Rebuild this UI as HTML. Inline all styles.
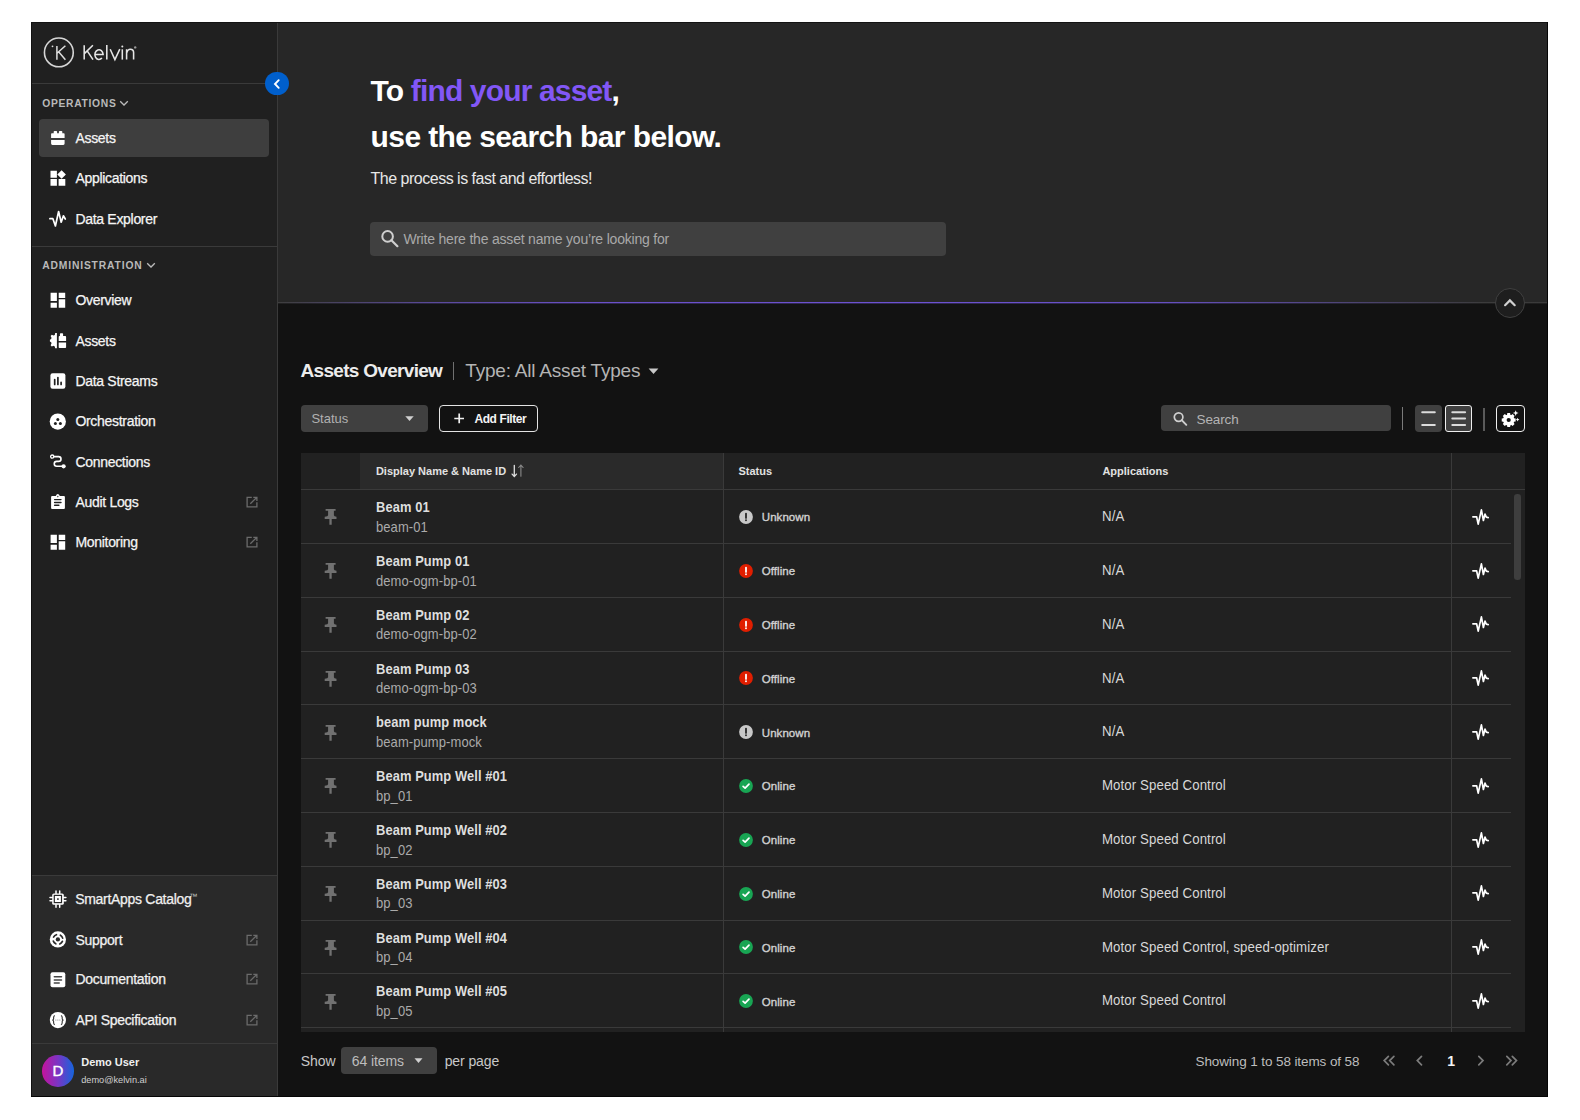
<!DOCTYPE html>
<html><head><meta charset="utf-8">
<style>
*{box-sizing:border-box;margin:0;padding:0}
html,body{width:1580px;height:1120px;background:#fff;overflow:hidden;font-family:"Liberation Sans",sans-serif}
.t{position:absolute;white-space:nowrap}
.b{position:absolute}
</style></head><body>

<div class="b" style="left:31px;top:22px;width:1517px;height:1075px;background:#121212;"></div>
<div class="b" style="left:31px;top:22px;width:246px;height:853px;background:#202020;"></div>
<div class="b" style="left:31px;top:876px;width:246px;height:221px;background:#292929;"></div>
<div class="b" style="left:277px;top:22px;width:1px;height:1075px;background:#3a3a3a;"></div>
<div class="b" style="left:31px;top:875px;width:246px;height:1px;background:#3a3a3a;"></div>
<div class="b" style="left:31px;top:83px;width:246px;height:1px;background:#3a3a3a;"></div>
<div class="b" style="left:31px;top:246px;width:246px;height:1px;background:#3a3a3a;"></div>
<div class="b" style="left:31px;top:1043px;width:246px;height:1px;background:#3a3a3a;"></div>
<svg class="b" style="left:31px;top:22px;" width="246" height="60" viewBox="31 22 246 60"><circle cx="58.85" cy="52.4" r="14.4" fill="none" stroke="#d6d6d6" stroke-width="1.6"/><path d="M56.9 45.9V59.7 M65.4 45.7L57.3 53 M58.6 51.8L65.4 59.7" fill="none" stroke="#dedede" stroke-width="1.5"/><circle cx="52.5" cy="46.3" r="0.9" fill="#dedede"/><g fill="none" stroke="#e6e6e6" stroke-width="1.55"><path d="M84.2 45.3V59.6 M92.9 45.3L84.6 53.4 M87.2 50.9L93 59.6"/><path d="M94.9 54.4H103.1 A4.1 4.9 0 1 0 101.9 58.1"/><path d="M106.8 45V59.6"/><path d="M110.2 49.2L114.9 59.6L119.8 49.2"/><path d="M122.3 49.3V59.6"/><path d="M126.6 59.6V49.3 M126.6 53.2Q127.6 49.2 130.3 49.2Q133.6 49.2 133.6 52.6V59.6"/></g><circle cx="122.3" cy="46.6" r="1" fill="#e6e6e6"/><circle cx="135.2" cy="47.4" r="1.2" fill="#999"/></svg>
<div class="t" style="left:42.20px;top:96.90px;font-size:10.3px;line-height:13px;font-weight:700;color:#b9b9b9;letter-spacing:0.7px;">OPERATIONS</div>
<svg class="b" style="left:119px;top:100px;" width="10" height="7" viewBox="0 0 10 7"><path d="M1.2 1.3L5 5L8.8 1.3" fill="none" stroke="#bbb" stroke-width="1.3"/></svg>
<div class="t" style="left:42.20px;top:259.01px;font-size:10.3px;line-height:13px;font-weight:700;color:#b9b9b9;letter-spacing:0.85px;">ADMINISTRATION</div>
<svg class="b" style="left:146px;top:262px;" width="10" height="7" viewBox="0 0 10 7"><path d="M1.2 1.3L5 5L8.8 1.3" fill="none" stroke="#bbb" stroke-width="1.3"/></svg>
<div class="b" style="left:39px;top:119px;width:230px;height:38px;background:#3e3e3e;border-radius:4px"></div>
<svg class="b" style="left:46px;top:126px;" width="24" height="24" viewBox="0 0 24 24"><path d="M5.1 12V8.1Q5.1 7.3 5.9 7.3H7.7V5.7Q7.7 4.9 8.5 4.9H10.3Q11.1 4.9 11.1 5.7V7.3H12.9V5.7Q12.9 4.9 13.7 4.9H15.5Q16.3 4.9 16.3 5.7V7.3H17.8Q18.6 7.3 18.6 8.1V12Z M5.1 13.9H18.6V17.6Q18.6 18.9 17.3 18.9H6.4Q5.1 18.9 5.1 17.6Z" fill="#fff"/></svg>
<div class="t" style="left:75.40px;top:129.10px;font-size:14px;line-height:18px;font-weight:400;color:#f5f5f5;letter-spacing:-0.3px;-webkit-text-stroke:0.25px #f5f5f5">Assets</div>
<svg class="b" style="left:46px;top:166px;" width="24" height="24" viewBox="0 0 24 24"><path d="M4.5 4.8H10.9V11.7H4.5Z M4.5 13.1H10.9V19.8H4.5Z M12.6 13.1H19.3V19.8H12.6Z M15.6 4.2L19.9 8.5L15.6 12.8L11.3 8.5Z" fill="#fff"/></svg>
<div class="t" style="left:75.40px;top:169.10px;font-size:14px;line-height:18px;font-weight:400;color:#f5f5f5;letter-spacing:-0.3px;-webkit-text-stroke:0.25px #f5f5f5">Applications</div>
<svg class="b" style="left:46px;top:207px;" width="24" height="24" viewBox="0 0 24 24"><path d="M3.9 11.7H6.9L9.4 19L12.6 4.5L15.2 15.2L17.4 8.8L19.3 12" fill="none" stroke="#fff" stroke-width="1.7" stroke-linejoin="round" stroke-linecap="round"/></svg>
<div class="t" style="left:75.40px;top:209.51px;font-size:14px;line-height:18px;font-weight:400;color:#f5f5f5;letter-spacing:-0.3px;-webkit-text-stroke:0.25px #f5f5f5">Data Explorer</div>
<svg class="b" style="left:46px;top:288px;" width="24" height="24" viewBox="0 0 24 24"><path d="M4.6 4.8H10.9V13.1H4.6Z M4.6 14.8H10.9V19.7H4.6Z M12.7 4.8H19.2V9.9H12.7Z M12.7 11.2H19.2V19.7H12.7Z" fill="#fff"/></svg>
<div class="t" style="left:75.40px;top:291.01px;font-size:14px;line-height:18px;font-weight:400;color:#f5f5f5;letter-spacing:-0.3px;-webkit-text-stroke:0.25px #f5f5f5">Overview</div>
<svg class="b" style="left:46px;top:329px;" width="24" height="24" viewBox="0 0 24 24"><path d="M10.9 4.1V19.3H9.2L8.8 17.4 7.5 16.8 5.8 17.6 4.6 16.2 5.5 14.6 5.2 13.2 3.9 12.5V10.8L5.2 10.1 5.5 8.7 4.6 7.1 5.8 5.7 7.5 6.5 8.8 5.9 9.2 4.1Z M12.7 7.9Q12.7 7.1 13.5 7.1H13.9V5Q13.9 4.2 14.7 4.2H16.3Q17.1 4.2 17.1 5V7.1H19.3Q20.1 7.1 20.1 7.9V11.9H12.7Z M12.7 13.4H20.1V18.3Q20.1 19.1 19.3 19.1H13.5Q12.7 19.1 12.7 18.3Z" fill="#fff"/></svg>
<div class="t" style="left:75.40px;top:331.60px;font-size:14px;line-height:18px;font-weight:400;color:#f5f5f5;letter-spacing:-0.3px;-webkit-text-stroke:0.25px #f5f5f5">Assets</div>
<svg class="b" style="left:46px;top:369px;" width="24" height="24" viewBox="0 0 24 24"><rect x="4.4" y="4.2" width="15" height="15.6" rx="2.2" fill="#fff"/><path d="M8.7 10.6V15.4 M11.9 8.5V15.4 M15.1 13.4V15.4" stroke="#202020" stroke-width="1.7" stroke-linecap="round"/></svg>
<div class="t" style="left:75.40px;top:371.60px;font-size:14px;line-height:18px;font-weight:400;color:#f5f5f5;letter-spacing:-0.3px;-webkit-text-stroke:0.25px #f5f5f5">Data Streams</div>
<svg class="b" style="left:46px;top:410px;" width="24" height="24" viewBox="0 0 24 24"><circle cx="11.8" cy="11.6" r="8.1" fill="#fff"/><circle cx="11.8" cy="9.4" r="1.5" fill="#202020"/><circle cx="9.4" cy="13.4" r="1.5" fill="#202020"/><circle cx="14.4" cy="13.4" r="1.5" fill="#202020"/></svg>
<div class="t" style="left:75.40px;top:412.20px;font-size:14px;line-height:18px;font-weight:400;color:#f5f5f5;letter-spacing:-0.3px;-webkit-text-stroke:0.25px #f5f5f5">Orchestration</div>
<svg class="b" style="left:46px;top:450px;" width="24" height="24" viewBox="0 0 24 24"><circle cx="6.2" cy="6.6" r="1.6" fill="none" stroke="#fff" stroke-width="1.3"/><path d="M7.9 6.6H12.6A2.4 2.4 0 0 1 12.6 11.4H10.7A2.45 2.45 0 0 0 10.7 16.3H16" fill="none" stroke="#fff" stroke-width="1.6"/><circle cx="17.6" cy="16.3" r="2.1" fill="#fff"/></svg>
<div class="t" style="left:75.40px;top:452.60px;font-size:14px;line-height:18px;font-weight:400;color:#f5f5f5;letter-spacing:-0.3px;-webkit-text-stroke:0.25px #f5f5f5">Connections</div>
<svg class="b" style="left:46px;top:490px;" width="24" height="24" viewBox="0 0 24 24"><path d="M6.1 6H9.8Q10.6 3.9 11.8 3.9Q13 3.9 13.8 6H17.9Q18.9 6 18.9 7V17.9Q18.9 18.9 17.9 18.9H6.1Q5.1 18.9 5.1 17.9V7Q5.1 6 6.1 6Z" fill="#fff"/><circle cx="11.8" cy="6.6" r="0.8" fill="#555"/><path d="M8.6 9.6H15 M8.6 12.5H15 M8.6 15.3H12.9" stroke="#202020" stroke-width="1.4" stroke-linecap="round"/></svg>
<div class="t" style="left:75.40px;top:493.01px;font-size:14px;line-height:18px;font-weight:400;color:#f5f5f5;letter-spacing:-0.3px;-webkit-text-stroke:0.25px #f5f5f5">Audit Logs</div>
<svg class="b" style="left:240px;top:490.0px;" width="24" height="24" viewBox="0 0 24 24"><path d="M11.8 7.3H7.1V16.9H16.9V12.2 M13.3 7.3H16.9V10.9 M16.5 7.7L10.3 13.8" fill="none" stroke="#6b6b6b" stroke-width="1.3"/></svg>
<svg class="b" style="left:46px;top:530px;" width="24" height="24" viewBox="0 0 24 24"><path d="M4.6 4.8H10.9V13.1H4.6Z M4.6 14.8H10.9V19.7H4.6Z M12.7 4.8H19.2V9.9H12.7Z M12.7 11.2H19.2V19.7H12.7Z" fill="#fff"/></svg>
<div class="t" style="left:75.40px;top:533.01px;font-size:14px;line-height:18px;font-weight:400;color:#f5f5f5;letter-spacing:-0.3px;-webkit-text-stroke:0.25px #f5f5f5">Monitoring</div>
<svg class="b" style="left:240px;top:530.0px;" width="24" height="24" viewBox="0 0 24 24"><path d="M11.8 7.3H7.1V16.9H16.9V12.2 M13.3 7.3H16.9V10.9 M16.5 7.7L10.3 13.8" fill="none" stroke="#6b6b6b" stroke-width="1.3"/></svg>
<svg class="b" style="left:46px;top:887px;" width="24" height="24" viewBox="0 0 24 24"><path d="M10 4.1V6.5 M13.7 4.1V6.5 M10 17.7V20.2 M13.7 17.7V20.2 M4 10.5H6.4 M4 13.7H6.4 M17.4 10.5H19.9 M17.4 13.7H19.9" stroke="#fff" stroke-width="1.5" stroke-linecap="round"/><rect x="6.2" y="6.4" width="11.6" height="11.4" rx="1.6" fill="#fff"/><rect x="8.3" y="8.4" width="7.2" height="7.2" fill="none" stroke="#292929" stroke-width="1.2"/><rect x="11" y="11.2" width="1.8" height="1.8" fill="#555"/></svg>
<div class="t" style="left:75.20px;top:889.70px;font-size:14px;line-height:18px;font-weight:400;color:#f0f0f0;letter-spacing:-0.3px;-webkit-text-stroke:0.25px #f0f0f0">SmartApps Catalog</div>
<div class="t" style="left:189.30px;top:891.51px;font-size:8px;line-height:10px;font-weight:400;color:#c4c4c4;letter-spacing:0px;">™</div>
<svg class="b" style="left:46px;top:927px;" width="24" height="24" viewBox="0 0 24 24"><circle cx="11.9" cy="12.4" r="8.1" fill="#fff"/><circle cx="11.9" cy="12.4" r="2.15" fill="#292929"/><circle cx="11.9" cy="12.4" r="4.9" fill="none" stroke="#292929" stroke-width="1.7" stroke-dasharray="3.6 4.1" stroke-dashoffset="5.7" stroke-linecap="round"/></svg>
<div class="t" style="left:75.40px;top:930.70px;font-size:14px;line-height:18px;font-weight:400;color:#f0f0f0;letter-spacing:-0.3px;-webkit-text-stroke:0.25px #f5f5f5">Support</div>
<svg class="b" style="left:240px;top:927.7px;" width="24" height="24" viewBox="0 0 24 24"><path d="M11.8 7.3H7.1V16.9H16.9V12.2 M13.3 7.3H16.9V10.9 M16.5 7.7L10.3 13.8" fill="none" stroke="#6b6b6b" stroke-width="1.3"/></svg>
<svg class="b" style="left:46px;top:968px;" width="24" height="24" viewBox="0 0 24 24"><rect x="4.5" y="4.3" width="14.8" height="15" rx="2" fill="#fff"/><path d="M8.3 8.7H15.5 M8.3 11.9H15.5 M8.3 15H13.2" stroke="#444" stroke-width="1.5" stroke-linecap="round"/></svg>
<div class="t" style="left:75.40px;top:970.10px;font-size:14px;line-height:18px;font-weight:400;color:#f0f0f0;letter-spacing:-0.3px;-webkit-text-stroke:0.25px #f5f5f5">Documentation</div>
<svg class="b" style="left:240px;top:967.1px;" width="24" height="24" viewBox="0 0 24 24"><path d="M11.8 7.3H7.1V16.9H16.9V12.2 M13.3 7.3H16.9V10.9 M16.5 7.7L10.3 13.8" fill="none" stroke="#6b6b6b" stroke-width="1.3"/></svg>
<svg class="b" style="left:46px;top:1008px;" width="24" height="24" viewBox="0 0 24 24"><circle cx="11.9" cy="12.1" r="8.1" fill="#fff"/><path d="M8.8 7.4Q7.6 8 7.6 9.5V10.8Q7.6 11.9 6.4 12.1Q7.6 12.3 7.6 13.4V14.7Q7.6 16.2 8.8 16.8 M15 7.4Q16.2 8 16.2 9.5V10.8Q16.2 11.9 17.4 12.1Q16.2 12.3 16.2 13.4V14.7Q16.2 16.2 15 16.8" fill="none" stroke="#3a3a3a" stroke-width="1.15"/><circle cx="9.9" cy="12.1" r="0.5" fill="#666"/><circle cx="11.9" cy="12.1" r="0.5" fill="#666"/><circle cx="13.9" cy="12.1" r="0.5" fill="#666"/></svg>
<div class="t" style="left:75.40px;top:1011.10px;font-size:14px;line-height:18px;font-weight:400;color:#f0f0f0;letter-spacing:-0.3px;-webkit-text-stroke:0.25px #f5f5f5">API Specification</div>
<svg class="b" style="left:240px;top:1008.0999999999999px;" width="24" height="24" viewBox="0 0 24 24"><path d="M11.8 7.3H7.1V16.9H16.9V12.2 M13.3 7.3H16.9V10.9 M16.5 7.7L10.3 13.8" fill="none" stroke="#6b6b6b" stroke-width="1.3"/></svg>
<div class="b" style="left:42px;top:1055.3px;width:31.7px;height:31.7px;border-radius:50%;background:linear-gradient(90deg,#c4139c 0%,#7a35c4 50%,#1565dc 100%)"></div>
<div class="t" style="left:52.60px;top:1060.91px;font-size:15px;line-height:20px;font-weight:400;color:#fff;letter-spacing:0px;-webkit-text-stroke:0.4px #fff">D</div>
<div class="t" style="left:81.20px;top:1055.41px;font-size:11px;line-height:14px;font-weight:700;color:#f0f0f0;letter-spacing:0px;">Demo User</div>
<div class="t" style="left:81.20px;top:1074.01px;font-size:9.2px;line-height:12px;font-weight:400;color:#d0d0d0;letter-spacing:0px;">demo@kelvin.ai</div>
<div class="b" style="left:278px;top:22px;width:1270px;height:280px;background:#272727;"></div>
<div class="b" style="left:278px;top:302px;width:1270px;height:1px;background:linear-gradient(90deg,#3e3e3e 0%,#5a4a9a 12%,#6a50c8 25%,#6c52d2 50%,#6650c0 70%,#4c4470 85%,#3c3c3c 95%,#3a3a3a 100%)"></div>
<div class="b" style="left:278px;top:303px;width:1270px;height:1px;opacity:0.35;background:linear-gradient(90deg,#3e3e3e 0%,#5a4a9a 12%,#6a50c8 25%,#6c52d2 50%,#6650c0 70%,#4c4470 85%,#3c3c3c 95%,#3a3a3a 100%)"></div>
<div class="t" style="left:370.60px;top:70.90px;font-size:30px;line-height:39px;font-weight:700;color:#ffffff;letter-spacing:-0.85px;">To <span style="color:#8257f6">find your asset</span>,</div>
<div class="t" style="left:370.60px;top:117.01px;font-size:30px;line-height:39px;font-weight:700;color:#ffffff;letter-spacing:-0.6px;">use the search bar below.</div>
<div class="t" style="left:370.60px;top:168.30px;font-size:16px;line-height:21px;font-weight:400;color:#e8e8e8;letter-spacing:-0.5px;">The process is fast and effortless!</div>
<div class="b" style="left:370px;top:222px;width:576px;height:34px;background:#404040;border-radius:4px"></div>
<svg class="b" style="left:376px;top:225px;" width="26" height="26" viewBox="0 0 26 26"><circle cx="11.6" cy="11.4" r="5.3" fill="none" stroke="#cfcfcf" stroke-width="2"/><path d="M15.4 15.2L21.4 21.2" stroke="#cfcfcf" stroke-width="2.2" stroke-linecap="round"/></svg>
<div class="t" style="left:403.40px;top:230.20px;font-size:14px;line-height:18px;font-weight:400;color:#a9a9a9;letter-spacing:-0.2px;">Write here the asset name you’re looking for</div>
<div class="b" style="left:1495px;top:287.5px;width:30px;height:30px;border-radius:50%;background:#1e1e1e;border:1px solid #404040"></div>
<svg class="b" style="left:1495px;top:287.5px;" width="30" height="30" viewBox="0 0 30 30"><path d="M10.1 17.2L14.9 12.4L19.7 17.2" fill="none" stroke="#d0d0d0" stroke-width="2.2" stroke-linecap="round"/></svg>
<div class="b" style="left:264.9px;top:71.6px;width:23.8px;height:23.8px;border-radius:50%;background:#005fcc"></div>
<svg class="b" style="left:264.9px;top:71.6px;" width="24" height="24" viewBox="0 0 24 24"><path d="M13.7 8.2L10 12L13.7 15.8" fill="none" stroke="#fff" stroke-width="1.9" stroke-linecap="round"/></svg>
<div class="t" style="left:300.60px;top:358.11px;font-size:19px;line-height:25px;font-weight:700;color:#ececec;letter-spacing:-0.7px;">Assets Overview</div>
<div class="b" style="left:452.5px;top:361.7px;width:1.1999999999999886px;height:18.80000000000001px;background:#707070;"></div>
<div class="t" style="left:465.30px;top:358.01px;font-size:19px;line-height:25px;font-weight:400;color:#b4b4b4;letter-spacing:-0.2px;">Type: All Asset Types</div>
<svg class="b" style="left:648px;top:368px;" width="11" height="7" viewBox="0 0 11 7"><path d="M0.6 0.6H10.4L5.5 6Z" fill="#c8c8c8"/></svg>
<div class="b" style="left:300.8px;top:405.1px;width:126.89999999999998px;height:26.599999999999966px;background:#404040;border-radius:4px"></div>
<div class="t" style="left:311.40px;top:410.31px;font-size:13px;line-height:17px;font-weight:400;color:#b0b0b0;letter-spacing:0px;">Status</div>
<svg class="b" style="left:405px;top:416px;" width="9" height="6" viewBox="0 0 9 6"><path d="M0.3 0.3H8.7L4.5 5Z" fill="#d0d0d0"/></svg>
<div class="b" style="left:439.1px;top:405.1px;width:99.1px;height:26.6px;border:1.5px solid #e4e4e4;border-radius:4px"></div>
<svg class="b" style="left:453px;top:412px;" width="12" height="12" viewBox="0 0 12 12"><path d="M6.2 1.6V11.3 M1.3 6.5H11" stroke="#f0f0f0" stroke-width="1.7"/></svg>
<div class="t" style="left:474.40px;top:410.81px;font-size:12px;line-height:16px;font-weight:700;color:#f4f4f4;letter-spacing:-0.4px;">Add Filter</div>
<div class="b" style="left:1160.8px;top:404.8px;width:230.20000000000005px;height:26.69999999999999px;background:#404040;border-radius:4px"></div>
<svg class="b" style="left:1170px;top:408px;" width="20" height="20" viewBox="0 0 20 20"><circle cx="8.6" cy="9.1" r="4.3" fill="none" stroke="#cfcfcf" stroke-width="1.7"/><path d="M11.7 12.2L16.3 16.8" stroke="#cfcfcf" stroke-width="1.9" stroke-linecap="round"/></svg>
<div class="t" style="left:1196.50px;top:410.51px;font-size:13.5px;line-height:18px;font-weight:400;color:#b4b4b4;letter-spacing:-0.1px;">Search</div>
<div class="b" style="left:1402px;top:406.6px;width:1.2000000000000455px;height:23.19999999999999px;background:#7a7a7a;"></div>
<div class="b" style="left:1414.5px;top:404.8px;width:27.0px;height:27.099999999999966px;background:#404040;border-radius:4px"></div>
<svg class="b" style="left:1414.5px;top:404.8px;" width="27" height="27.1" viewBox="1414.5 404.8 27 27.1"><path d="M1421.7 412H1434.3 M1421.7 424.8H1434.3" stroke="#dcdcdc" stroke-width="2" stroke-linecap="round"/></svg>
<div class="b" style="left:1445.1px;top:404.8px;width:27.1px;height:27.1px;border:1.5px solid #eeeeee;border-radius:3px;background:#404040"></div>
<svg class="b" style="left:1445.1px;top:404.8px;" width="27.1" height="27.1" viewBox="1445.1 404.8 27.1 27.1"><path d="M1452.4 412H1465.2 M1452.4 418.4H1465.2 M1452.4 424.8H1465.2" stroke="#dcdcdc" stroke-width="2" stroke-linecap="round"/></svg>
<div class="b" style="left:1483.4px;top:407.8px;width:1.599999999999909px;height:22.899999999999977px;background:#5a5a5a;"></div>
<div class="b" style="left:1496.4px;top:405px;width:28.4px;height:26.6px;border:1.5px solid #eeeeee;border-radius:4px"></div>
<svg class="b" style="left:1490px;top:398px;" width="40" height="40" viewBox="1490 398 40 40"><g transform="translate(1508.7 420)"><path d="M5.03 -1.67 L6.96 -1.41 L6.96 1.41 L5.03 1.67 L4.74 2.38 L5.92 3.92 L3.92 5.92 L2.38 4.74 L1.67 5.03 L1.41 6.96 L-1.41 6.96 L-1.67 5.03 L-2.38 4.74 L-3.92 5.92 L-5.92 3.92 L-4.74 2.38 L-5.03 1.67 L-6.96 1.41 L-6.96 -1.41 L-5.03 -1.67 L-4.74 -2.38 L-5.92 -3.92 L-3.92 -5.92 L-2.38 -4.74 L-1.67 -5.03 L-1.41 -6.96 L1.41 -6.96 L1.67 -5.03 L2.38 -4.74 L3.92 -5.92 L5.92 -3.92 L4.74 -2.38Z" fill="#fff"/><circle r="5.6" fill="#fff"/><circle r="2.1" fill="#121212"/></g><path d="M1515.7 410.2L1516.5 412.3 1518.6 413 1516.5 413.8 1515.7 415.9 1514.9 413.8 1512.8 413 1514.9 412.3Z M1517.6 417.8L1518.2 419 1519.4 419.6 1518.2 420.2 1517.6 421.4 1517 420.2 1515.8 419.6 1517 419Z" fill="#fff"/></svg>
<div class="b" style="left:301px;top:453px;width:1224px;height:578.5999999999999px;background:#212121;"></div>
<div class="b" style="left:360px;top:453px;width:362.75px;height:36.25px;background:#2a2a2a;"></div>
<div class="t" style="left:375.90px;top:464.00px;font-size:11px;line-height:14px;font-weight:700;color:#e2e2e2;letter-spacing:0px;">Display Name &amp; Name ID</div>
<svg class="b" style="left:510px;top:462px;" width="16" height="17" viewBox="0 0 16 17"><path d="M4.3 3.3V14.3 M2.1 12.1L4.3 14.5 6.5 12.1" fill="none" stroke="#dedede" stroke-width="1.3" stroke-linecap="round"/><path d="M10.9 14.3V3.3 M8.7 5.5L10.9 3.1 13.1 5.5" fill="none" stroke="#8a8a8a" stroke-width="1.1" stroke-linecap="round"/></svg>
<div class="t" style="left:738.40px;top:464.00px;font-size:11px;line-height:14px;font-weight:700;color:#e2e2e2;letter-spacing:0px;">Status</div>
<div class="t" style="left:1102.40px;top:464.00px;font-size:11px;line-height:14px;font-weight:700;color:#e2e2e2;letter-spacing:0px;">Applications</div>
<div class="b" style="left:301px;top:489px;width:1224px;height:1px;background:#3a3a3a;"></div>
<div class="b" style="left:722.5px;top:453px;width:1.0px;height:578.5999999999999px;background:#3a3a3a;"></div>
<div class="b" style="left:1451.2px;top:453px;width:1.0px;height:578.5999999999999px;background:#3a3a3a;"></div>
<div class="t" style="left:375.60px;top:498.15px;font-size:14.4px;line-height:19px;font-weight:700;color:#dedede;letter-spacing:0.1px;transform:scaleX(0.896);transform-origin:0 0;">Beam 01</div>
<div class="t" style="left:375.80px;top:517.76px;font-size:14.4px;line-height:19px;font-weight:400;color:#ababab;letter-spacing:0.1px;transform:scaleX(0.902);transform-origin:0 0;">beam-01</div>
<svg class="b" style="left:320px;top:505.35px;" width="22" height="24" viewBox="0 0 22 24"><path d="M5.6 4.1H15.6V5.8H13.9V10.2Q13.9 11.3 16.5 11.8V13.9H11.7V19.7H9.4V13.9H4.7V11.8Q8.1 11.3 8.1 10.2V5.8H5.6Z" fill="#717171"/></svg>
<svg class="b" style="left:739.1px;top:510.05px;" width="14" height="14" viewBox="0 0 14 14"><circle cx="7" cy="7" r="6.9" fill="#c8c8c8"/><path d="M7 3.6V7.9" stroke="#252525" stroke-width="1.8" stroke-linecap="round"/><circle cx="7" cy="10.2" r="0.95" fill="#252525"/></svg>
<div class="t" style="left:761.80px;top:510.46px;font-size:11.5px;line-height:15px;font-weight:400;color:#d2d2d2;letter-spacing:0.05px;-webkit-text-stroke:0.35px #d2d2d2">Unknown</div>
<div class="t" style="left:1102.40px;top:507.25px;font-size:14.6px;line-height:19px;font-weight:400;color:#d8d8d8;letter-spacing:0.1px;transform:scaleX(0.907);transform-origin:0 0;">N/A</div>
<svg class="b" style="left:1472.2px;top:508.75px;" width="17.5" height="17" viewBox="0 0 17.5 17"><path d="M0.9 7.8H4.6L6.2 15.1L9.4 0.9L11.4 11.5L13 5.1L14.3 8.2L16.2 8.6" fill="none" stroke="#fff" stroke-width="1.7" stroke-linejoin="round" stroke-linecap="round"/></svg>
<div class="b" style="left:301px;top:543px;width:1209.7px;height:1px;background:#3a3a3a;"></div>
<div class="t" style="left:375.60px;top:551.95px;font-size:14.4px;line-height:19px;font-weight:700;color:#dedede;letter-spacing:0.1px;transform:scaleX(0.896);transform-origin:0 0;">Beam Pump 01</div>
<div class="t" style="left:375.80px;top:571.56px;font-size:14.4px;line-height:19px;font-weight:400;color:#ababab;letter-spacing:0.1px;transform:scaleX(0.902);transform-origin:0 0;">demo-ogm-bp-01</div>
<svg class="b" style="left:320px;top:559.15px;" width="22" height="24" viewBox="0 0 22 24"><path d="M5.6 4.1H15.6V5.8H13.9V10.2Q13.9 11.3 16.5 11.8V13.9H11.7V19.7H9.4V13.9H4.7V11.8Q8.1 11.3 8.1 10.2V5.8H5.6Z" fill="#717171"/></svg>
<svg class="b" style="left:739.1px;top:563.8499999999999px;" width="14" height="14" viewBox="0 0 14 14"><circle cx="7" cy="7" r="6.9" fill="#e01e00"/><path d="M7 3.6V7.9" stroke="#fff" stroke-width="1.8" stroke-linecap="round"/><circle cx="7" cy="10.2" r="0.95" fill="#fff"/></svg>
<div class="t" style="left:761.80px;top:564.26px;font-size:11.5px;line-height:15px;font-weight:400;color:#d2d2d2;letter-spacing:0.05px;-webkit-text-stroke:0.35px #d2d2d2">Offline</div>
<div class="t" style="left:1102.40px;top:561.05px;font-size:14.6px;line-height:19px;font-weight:400;color:#d8d8d8;letter-spacing:0.1px;transform:scaleX(0.907);transform-origin:0 0;">N/A</div>
<svg class="b" style="left:1472.2px;top:562.55px;" width="17.5" height="17" viewBox="0 0 17.5 17"><path d="M0.9 7.8H4.6L6.2 15.1L9.4 0.9L11.4 11.5L13 5.1L14.3 8.2L16.2 8.6" fill="none" stroke="#fff" stroke-width="1.7" stroke-linejoin="round" stroke-linecap="round"/></svg>
<div class="b" style="left:301px;top:597px;width:1209.7px;height:1px;background:#3a3a3a;"></div>
<div class="t" style="left:375.60px;top:605.76px;font-size:14.4px;line-height:19px;font-weight:700;color:#dedede;letter-spacing:0.1px;transform:scaleX(0.896);transform-origin:0 0;">Beam Pump 02</div>
<div class="t" style="left:375.80px;top:625.35px;font-size:14.4px;line-height:19px;font-weight:400;color:#ababab;letter-spacing:0.1px;transform:scaleX(0.902);transform-origin:0 0;">demo-ogm-bp-02</div>
<svg class="b" style="left:320px;top:612.95px;" width="22" height="24" viewBox="0 0 22 24"><path d="M5.6 4.1H15.6V5.8H13.9V10.2Q13.9 11.3 16.5 11.8V13.9H11.7V19.7H9.4V13.9H4.7V11.8Q8.1 11.3 8.1 10.2V5.8H5.6Z" fill="#717171"/></svg>
<svg class="b" style="left:739.1px;top:617.65px;" width="14" height="14" viewBox="0 0 14 14"><circle cx="7" cy="7" r="6.9" fill="#e01e00"/><path d="M7 3.6V7.9" stroke="#fff" stroke-width="1.8" stroke-linecap="round"/><circle cx="7" cy="10.2" r="0.95" fill="#fff"/></svg>
<div class="t" style="left:761.80px;top:618.07px;font-size:11.5px;line-height:15px;font-weight:400;color:#d2d2d2;letter-spacing:0.05px;-webkit-text-stroke:0.35px #d2d2d2">Offline</div>
<div class="t" style="left:1102.40px;top:614.86px;font-size:14.6px;line-height:19px;font-weight:400;color:#d8d8d8;letter-spacing:0.1px;transform:scaleX(0.907);transform-origin:0 0;">N/A</div>
<svg class="b" style="left:1472.2px;top:616.35px;" width="17.5" height="17" viewBox="0 0 17.5 17"><path d="M0.9 7.8H4.6L6.2 15.1L9.4 0.9L11.4 11.5L13 5.1L14.3 8.2L16.2 8.6" fill="none" stroke="#fff" stroke-width="1.7" stroke-linejoin="round" stroke-linecap="round"/></svg>
<div class="b" style="left:301px;top:651px;width:1209.7px;height:1px;background:#3a3a3a;"></div>
<div class="t" style="left:375.60px;top:659.56px;font-size:14.4px;line-height:19px;font-weight:700;color:#dedede;letter-spacing:0.1px;transform:scaleX(0.896);transform-origin:0 0;">Beam Pump 03</div>
<div class="t" style="left:375.80px;top:679.15px;font-size:14.4px;line-height:19px;font-weight:400;color:#ababab;letter-spacing:0.1px;transform:scaleX(0.902);transform-origin:0 0;">demo-ogm-bp-03</div>
<svg class="b" style="left:320px;top:666.75px;" width="22" height="24" viewBox="0 0 22 24"><path d="M5.6 4.1H15.6V5.8H13.9V10.2Q13.9 11.3 16.5 11.8V13.9H11.7V19.7H9.4V13.9H4.7V11.8Q8.1 11.3 8.1 10.2V5.8H5.6Z" fill="#717171"/></svg>
<svg class="b" style="left:739.1px;top:671.4499999999999px;" width="14" height="14" viewBox="0 0 14 14"><circle cx="7" cy="7" r="6.9" fill="#e01e00"/><path d="M7 3.6V7.9" stroke="#fff" stroke-width="1.8" stroke-linecap="round"/><circle cx="7" cy="10.2" r="0.95" fill="#fff"/></svg>
<div class="t" style="left:761.80px;top:671.85px;font-size:11.5px;line-height:15px;font-weight:400;color:#d2d2d2;letter-spacing:0.05px;-webkit-text-stroke:0.35px #d2d2d2">Offline</div>
<div class="t" style="left:1102.40px;top:668.66px;font-size:14.6px;line-height:19px;font-weight:400;color:#d8d8d8;letter-spacing:0.1px;transform:scaleX(0.907);transform-origin:0 0;">N/A</div>
<svg class="b" style="left:1472.2px;top:670.15px;" width="17.5" height="17" viewBox="0 0 17.5 17"><path d="M0.9 7.8H4.6L6.2 15.1L9.4 0.9L11.4 11.5L13 5.1L14.3 8.2L16.2 8.6" fill="none" stroke="#fff" stroke-width="1.7" stroke-linejoin="round" stroke-linecap="round"/></svg>
<div class="b" style="left:301px;top:704px;width:1209.7px;height:1px;background:#3a3a3a;"></div>
<div class="t" style="left:375.60px;top:713.35px;font-size:14.4px;line-height:19px;font-weight:700;color:#dedede;letter-spacing:0.1px;transform:scaleX(0.896);transform-origin:0 0;">beam pump mock</div>
<div class="t" style="left:375.80px;top:732.95px;font-size:14.4px;line-height:19px;font-weight:400;color:#ababab;letter-spacing:0.1px;transform:scaleX(0.902);transform-origin:0 0;">beam-pump-mock</div>
<svg class="b" style="left:320px;top:720.5500000000001px;" width="22" height="24" viewBox="0 0 22 24"><path d="M5.6 4.1H15.6V5.8H13.9V10.2Q13.9 11.3 16.5 11.8V13.9H11.7V19.7H9.4V13.9H4.7V11.8Q8.1 11.3 8.1 10.2V5.8H5.6Z" fill="#717171"/></svg>
<svg class="b" style="left:739.1px;top:725.25px;" width="14" height="14" viewBox="0 0 14 14"><circle cx="7" cy="7" r="6.9" fill="#c8c8c8"/><path d="M7 3.6V7.9" stroke="#252525" stroke-width="1.8" stroke-linecap="round"/><circle cx="7" cy="10.2" r="0.95" fill="#252525"/></svg>
<div class="t" style="left:761.80px;top:725.66px;font-size:11.5px;line-height:15px;font-weight:400;color:#d2d2d2;letter-spacing:0.05px;-webkit-text-stroke:0.35px #d2d2d2">Unknown</div>
<div class="t" style="left:1102.40px;top:722.46px;font-size:14.6px;line-height:19px;font-weight:400;color:#d8d8d8;letter-spacing:0.1px;transform:scaleX(0.907);transform-origin:0 0;">N/A</div>
<svg class="b" style="left:1472.2px;top:723.95px;" width="17.5" height="17" viewBox="0 0 17.5 17"><path d="M0.9 7.8H4.6L6.2 15.1L9.4 0.9L11.4 11.5L13 5.1L14.3 8.2L16.2 8.6" fill="none" stroke="#fff" stroke-width="1.7" stroke-linejoin="round" stroke-linecap="round"/></svg>
<div class="b" style="left:301px;top:758px;width:1209.7px;height:1px;background:#3a3a3a;"></div>
<div class="t" style="left:375.60px;top:767.15px;font-size:14.4px;line-height:19px;font-weight:700;color:#dedede;letter-spacing:0.1px;transform:scaleX(0.896);transform-origin:0 0;">Beam Pump Well #01</div>
<div class="t" style="left:375.80px;top:786.76px;font-size:14.4px;line-height:19px;font-weight:400;color:#ababab;letter-spacing:0.1px;transform:scaleX(0.902);transform-origin:0 0;">bp_01</div>
<svg class="b" style="left:320px;top:774.35px;" width="22" height="24" viewBox="0 0 22 24"><path d="M5.6 4.1H15.6V5.8H13.9V10.2Q13.9 11.3 16.5 11.8V13.9H11.7V19.7H9.4V13.9H4.7V11.8Q8.1 11.3 8.1 10.2V5.8H5.6Z" fill="#717171"/></svg>
<svg class="b" style="left:739.1px;top:779.05px;" width="14" height="14" viewBox="0 0 14 14"><circle cx="7" cy="7" r="6.9" fill="#18a553"/><path d="M4.1 7.3L6.1 9.2L10 5.2" fill="none" stroke="#fff" stroke-width="1.7" stroke-linecap="round" stroke-linejoin="round"/></svg>
<div class="t" style="left:761.80px;top:779.46px;font-size:11.5px;line-height:15px;font-weight:400;color:#d2d2d2;letter-spacing:0.05px;-webkit-text-stroke:0.35px #d2d2d2">Online</div>
<div class="t" style="left:1102.40px;top:776.25px;font-size:14.6px;line-height:19px;font-weight:400;color:#d8d8d8;letter-spacing:0.1px;transform:scaleX(0.907);transform-origin:0 0;">Motor Speed Control</div>
<svg class="b" style="left:1472.2px;top:777.75px;" width="17.5" height="17" viewBox="0 0 17.5 17"><path d="M0.9 7.8H4.6L6.2 15.1L9.4 0.9L11.4 11.5L13 5.1L14.3 8.2L16.2 8.6" fill="none" stroke="#fff" stroke-width="1.7" stroke-linejoin="round" stroke-linecap="round"/></svg>
<div class="b" style="left:301px;top:812px;width:1209.7px;height:1px;background:#3a3a3a;"></div>
<div class="t" style="left:375.60px;top:820.95px;font-size:14.4px;line-height:19px;font-weight:700;color:#dedede;letter-spacing:0.1px;transform:scaleX(0.896);transform-origin:0 0;">Beam Pump Well #02</div>
<div class="t" style="left:375.80px;top:840.56px;font-size:14.4px;line-height:19px;font-weight:400;color:#ababab;letter-spacing:0.1px;transform:scaleX(0.902);transform-origin:0 0;">bp_02</div>
<svg class="b" style="left:320px;top:828.15px;" width="22" height="24" viewBox="0 0 22 24"><path d="M5.6 4.1H15.6V5.8H13.9V10.2Q13.9 11.3 16.5 11.8V13.9H11.7V19.7H9.4V13.9H4.7V11.8Q8.1 11.3 8.1 10.2V5.8H5.6Z" fill="#717171"/></svg>
<svg class="b" style="left:739.1px;top:832.8499999999999px;" width="14" height="14" viewBox="0 0 14 14"><circle cx="7" cy="7" r="6.9" fill="#18a553"/><path d="M4.1 7.3L6.1 9.2L10 5.2" fill="none" stroke="#fff" stroke-width="1.7" stroke-linecap="round" stroke-linejoin="round"/></svg>
<div class="t" style="left:761.80px;top:833.26px;font-size:11.5px;line-height:15px;font-weight:400;color:#d2d2d2;letter-spacing:0.05px;-webkit-text-stroke:0.35px #d2d2d2">Online</div>
<div class="t" style="left:1102.40px;top:830.05px;font-size:14.6px;line-height:19px;font-weight:400;color:#d8d8d8;letter-spacing:0.1px;transform:scaleX(0.907);transform-origin:0 0;">Motor Speed Control</div>
<svg class="b" style="left:1472.2px;top:831.55px;" width="17.5" height="17" viewBox="0 0 17.5 17"><path d="M0.9 7.8H4.6L6.2 15.1L9.4 0.9L11.4 11.5L13 5.1L14.3 8.2L16.2 8.6" fill="none" stroke="#fff" stroke-width="1.7" stroke-linejoin="round" stroke-linecap="round"/></svg>
<div class="b" style="left:301px;top:866px;width:1209.7px;height:1px;background:#3a3a3a;"></div>
<div class="t" style="left:375.60px;top:874.76px;font-size:14.4px;line-height:19px;font-weight:700;color:#dedede;letter-spacing:0.1px;transform:scaleX(0.896);transform-origin:0 0;">Beam Pump Well #03</div>
<div class="t" style="left:375.80px;top:894.35px;font-size:14.4px;line-height:19px;font-weight:400;color:#ababab;letter-spacing:0.1px;transform:scaleX(0.902);transform-origin:0 0;">bp_03</div>
<svg class="b" style="left:320px;top:881.9499999999999px;" width="22" height="24" viewBox="0 0 22 24"><path d="M5.6 4.1H15.6V5.8H13.9V10.2Q13.9 11.3 16.5 11.8V13.9H11.7V19.7H9.4V13.9H4.7V11.8Q8.1 11.3 8.1 10.2V5.8H5.6Z" fill="#717171"/></svg>
<svg class="b" style="left:739.1px;top:886.6499999999999px;" width="14" height="14" viewBox="0 0 14 14"><circle cx="7" cy="7" r="6.9" fill="#18a553"/><path d="M4.1 7.3L6.1 9.2L10 5.2" fill="none" stroke="#fff" stroke-width="1.7" stroke-linecap="round" stroke-linejoin="round"/></svg>
<div class="t" style="left:761.80px;top:887.07px;font-size:11.5px;line-height:15px;font-weight:400;color:#d2d2d2;letter-spacing:0.05px;-webkit-text-stroke:0.35px #d2d2d2">Online</div>
<div class="t" style="left:1102.40px;top:883.86px;font-size:14.6px;line-height:19px;font-weight:400;color:#d8d8d8;letter-spacing:0.1px;transform:scaleX(0.907);transform-origin:0 0;">Motor Speed Control</div>
<svg class="b" style="left:1472.2px;top:885.3499999999999px;" width="17.5" height="17" viewBox="0 0 17.5 17"><path d="M0.9 7.8H4.6L6.2 15.1L9.4 0.9L11.4 11.5L13 5.1L14.3 8.2L16.2 8.6" fill="none" stroke="#fff" stroke-width="1.7" stroke-linejoin="round" stroke-linecap="round"/></svg>
<div class="b" style="left:301px;top:920px;width:1209.7px;height:1px;background:#3a3a3a;"></div>
<div class="t" style="left:375.60px;top:928.56px;font-size:14.4px;line-height:19px;font-weight:700;color:#dedede;letter-spacing:0.1px;transform:scaleX(0.896);transform-origin:0 0;">Beam Pump Well #04</div>
<div class="t" style="left:375.80px;top:948.15px;font-size:14.4px;line-height:19px;font-weight:400;color:#ababab;letter-spacing:0.1px;transform:scaleX(0.902);transform-origin:0 0;">bp_04</div>
<svg class="b" style="left:320px;top:935.75px;" width="22" height="24" viewBox="0 0 22 24"><path d="M5.6 4.1H15.6V5.8H13.9V10.2Q13.9 11.3 16.5 11.8V13.9H11.7V19.7H9.4V13.9H4.7V11.8Q8.1 11.3 8.1 10.2V5.8H5.6Z" fill="#717171"/></svg>
<svg class="b" style="left:739.1px;top:940.4499999999999px;" width="14" height="14" viewBox="0 0 14 14"><circle cx="7" cy="7" r="6.9" fill="#18a553"/><path d="M4.1 7.3L6.1 9.2L10 5.2" fill="none" stroke="#fff" stroke-width="1.7" stroke-linecap="round" stroke-linejoin="round"/></svg>
<div class="t" style="left:761.80px;top:940.85px;font-size:11.5px;line-height:15px;font-weight:400;color:#d2d2d2;letter-spacing:0.05px;-webkit-text-stroke:0.35px #d2d2d2">Online</div>
<div class="t" style="left:1102.40px;top:937.66px;font-size:14.6px;line-height:19px;font-weight:400;color:#d8d8d8;letter-spacing:0.1px;transform:scaleX(0.907);transform-origin:0 0;">Motor Speed Control, speed-optimizer</div>
<svg class="b" style="left:1472.2px;top:939.15px;" width="17.5" height="17" viewBox="0 0 17.5 17"><path d="M0.9 7.8H4.6L6.2 15.1L9.4 0.9L11.4 11.5L13 5.1L14.3 8.2L16.2 8.6" fill="none" stroke="#fff" stroke-width="1.7" stroke-linejoin="round" stroke-linecap="round"/></svg>
<div class="b" style="left:301px;top:973px;width:1209.7px;height:1px;background:#3a3a3a;"></div>
<div class="t" style="left:375.60px;top:982.35px;font-size:14.4px;line-height:19px;font-weight:700;color:#dedede;letter-spacing:0.1px;transform:scaleX(0.896);transform-origin:0 0;">Beam Pump Well #05</div>
<div class="t" style="left:375.80px;top:1001.95px;font-size:14.4px;line-height:19px;font-weight:400;color:#ababab;letter-spacing:0.1px;transform:scaleX(0.902);transform-origin:0 0;">bp_05</div>
<svg class="b" style="left:320px;top:989.5500000000001px;" width="22" height="24" viewBox="0 0 22 24"><path d="M5.6 4.1H15.6V5.8H13.9V10.2Q13.9 11.3 16.5 11.8V13.9H11.7V19.7H9.4V13.9H4.7V11.8Q8.1 11.3 8.1 10.2V5.8H5.6Z" fill="#717171"/></svg>
<svg class="b" style="left:739.1px;top:994.25px;" width="14" height="14" viewBox="0 0 14 14"><circle cx="7" cy="7" r="6.9" fill="#18a553"/><path d="M4.1 7.3L6.1 9.2L10 5.2" fill="none" stroke="#fff" stroke-width="1.7" stroke-linecap="round" stroke-linejoin="round"/></svg>
<div class="t" style="left:761.80px;top:994.66px;font-size:11.5px;line-height:15px;font-weight:400;color:#d2d2d2;letter-spacing:0.05px;-webkit-text-stroke:0.35px #d2d2d2">Online</div>
<div class="t" style="left:1102.40px;top:991.46px;font-size:14.6px;line-height:19px;font-weight:400;color:#d8d8d8;letter-spacing:0.1px;transform:scaleX(0.907);transform-origin:0 0;">Motor Speed Control</div>
<svg class="b" style="left:1472.2px;top:992.95px;" width="17.5" height="17" viewBox="0 0 17.5 17"><path d="M0.9 7.8H4.6L6.2 15.1L9.4 0.9L11.4 11.5L13 5.1L14.3 8.2L16.2 8.6" fill="none" stroke="#fff" stroke-width="1.7" stroke-linejoin="round" stroke-linecap="round"/></svg>
<div class="b" style="left:301px;top:1027px;width:1209.7px;height:1px;background:#3a3a3a;"></div>
<div class="b" style="left:1514.4px;top:494px;width:6.399999999999864px;height:86.39999999999998px;background:#3e3e3e;border-radius:3.2px"></div>
<div class="t" style="left:300.80px;top:1051.70px;font-size:14px;line-height:18px;font-weight:400;color:#c8c8c8;letter-spacing:-0.1px;">Show</div>
<div class="b" style="left:341.2px;top:1047.2px;width:95.80000000000001px;height:26.399999999999864px;background:#404040;border-radius:4px"></div>
<div class="t" style="left:351.80px;top:1051.70px;font-size:14px;line-height:18px;font-weight:400;color:#bdbdbd;letter-spacing:-0.1px;">64 items</div>
<svg class="b" style="left:414px;top:1058px;" width="9" height="6" viewBox="0 0 9 6"><path d="M0.5 0.3H8.5L4.5 5Z" fill="#d0d0d0"/></svg>
<div class="t" style="left:444.70px;top:1051.70px;font-size:14px;line-height:18px;font-weight:400;color:#c8c8c8;letter-spacing:-0.1px;">per page</div>
<div class="t" style="left:1195.50px;top:1052.70px;font-size:13.5px;line-height:18px;font-weight:400;color:#bdbdbd;letter-spacing:-0.1px;">Showing 1 to 58 items of 58</div>
<svg class="b" style="left:1380px;top:1052px;" width="18" height="18" viewBox="0 0 18 18"><path d="M8.4 4.4L4.2 8.6L8.4 12.8 M13.9 4.4L9.7 8.6L13.9 12.8" fill="none" stroke="#7c7c7c" stroke-width="1.7" stroke-linecap="round"/></svg>
<svg class="b" style="left:1412px;top:1052px;" width="14" height="18" viewBox="0 0 14 18"><path d="M9.5 4.4L5.3 8.6L9.5 12.8" fill="none" stroke="#7c7c7c" stroke-width="1.7" stroke-linecap="round"/></svg>
<div class="t" style="left:1447.30px;top:1051.70px;font-size:14px;line-height:18px;font-weight:700;color:#f4f4f4;letter-spacing:0px;">1</div>
<svg class="b" style="left:1474px;top:1052px;" width="14" height="18" viewBox="0 0 14 18"><path d="M4.8 4.4L9 8.6L4.8 12.8" fill="none" stroke="#7c7c7c" stroke-width="1.7" stroke-linecap="round"/></svg>
<svg class="b" style="left:1502px;top:1052px;" width="18" height="18" viewBox="0 0 18 18"><path d="M4.8 4.4L9 8.6L4.8 12.8 M10.3 4.4L14.5 8.6L10.3 12.8" fill="none" stroke="#7c7c7c" stroke-width="1.7" stroke-linecap="round"/></svg>
<div class="b" style="left:31px;top:22px;width:1px;height:1075px;background:#111111;"></div>
<div class="b" style="left:31px;top:22px;width:1517px;height:1px;background:#131313;"></div>
<div class="b" style="left:1547px;top:22px;width:1px;height:1075px;background:#050505;"></div>
<div class="b" style="left:31px;top:1096px;width:1517px;height:1px;background:#050505;"></div>
</body></html>
